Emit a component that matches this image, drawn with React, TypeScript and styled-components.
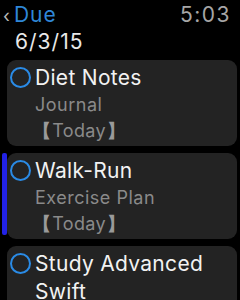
import React from 'react';
import styled, { createGlobalStyle } from 'styled-components';

interface Task {
    title: string;
    list?: string;
    due?: string;
    flagged?: boolean;
}

const tasks: Task[] = [
    { title: 'Diet Notes', list: 'Journal', due: 'Today' },
    { title: 'Walk-Run', list: 'Exercise Plan', due: 'Today', flagged: true },
    { title: 'Study Advanced Swift' },
];

const GlobalStyle = createGlobalStyle`
  body {
    margin: 0;
    background: #000;
    font-family: Inter, "Open Sans", sans-serif;
    overflow: hidden;
  }
`

const Screen = styled.div`
  width: 240px;
  height: 300px;
  overflow: hidden;
  background: #000;
`

const Header = styled.div`
  display: flex;
  justify-content: space-between;
  align-items: baseline;
  padding: 2px 9px 0 3px;
  line-height: 26px;
`

const Back = styled.div`
  display: flex;
  align-items: baseline;
  font-size: 21px;
  letter-spacing: 1px;
  color: #2f87d8;
`

const Chevron = styled.span`
  color: #b8b8b8;
  font-size: 18px;
  margin-right: 3px;
`

const Clock = styled.div`
  font-size: 21px;
  letter-spacing: 1.5px;
  color: #a6a6a6;
`

const DateLine = styled.div`
  padding-left: 15px;
  margin-bottom: 5px;
  font-size: 21px;
  letter-spacing: 1px;
  color: #e8e8e8;
  line-height: 26px;
`

const List = styled.div`
  display: flex;
  flex-direction: column;
  gap: 7px;
`

const Row = styled.div`
  display: flex;
  align-items: stretch;
`

const Flag = styled.div<{ $on?: boolean }>`
  width: 5px;
  margin: 0 0 4px 2px;
  border-radius: 2px;
  background: ${p => p.$on ? '#2222e6' : 'transparent'};
`

const Card = styled.div`
  flex: 1;
  margin-right: 3px;
  background: #232323;
  border-radius: 9px;
  padding: 4px 6px 2px 3px;
  display: flex;
  gap: 4px;
`

const Circle = styled.div`
  flex: none;
  width: 17px;
  height: 17px;
  margin-top: 3px;
  border: 2.5px solid #2a8be6;
  border-radius: 50%;
`

const Body = styled.div`
  display: flex;
  flex-direction: column;
`

const Title = styled.div`
  font-size: 21px;
  line-height: 28px;
  color: #f2f2f2;
  letter-spacing: 0.3px;
`

const Sub = styled.div`
  font-size: 18px;
  line-height: 26px;
  color: #8a8a8a;
  letter-spacing: 0.5px;
`

const Due = styled(Sub)`
  letter-spacing: 0.3px;
`

const Bracket = styled.span<{ $close?: boolean }>`
  display: inline-block;
  font-weight: 700;
  color: #9a9a9a;
  margin: ${p => p.$close ? '0 -6px 0 1px' : '0 1px 0 -2px'};
`

export default function App() {
    return (
        <Screen>
            <GlobalStyle />
            <Header>
                <Back><Chevron>‹</Chevron>Due</Back>
                <Clock>5:03</Clock>
            </Header>
            <DateLine>6/3/15</DateLine>
            <List>
                {tasks.map(t => (
                    <Row key={t.title}>
                        <Flag $on={t.flagged} />
                        <Card>
                            <Circle />
                            <Body>
                                <Title>{t.title}</Title>
                                {t.list && <Sub>{t.list}</Sub>}
                                {t.due && <Due><Bracket>【</Bracket>{t.due}<Bracket $close>】</Bracket></Due>}
                            </Body>
                        </Card>
                    </Row>
                ))}
            </List>
        </Screen>
    );
}
